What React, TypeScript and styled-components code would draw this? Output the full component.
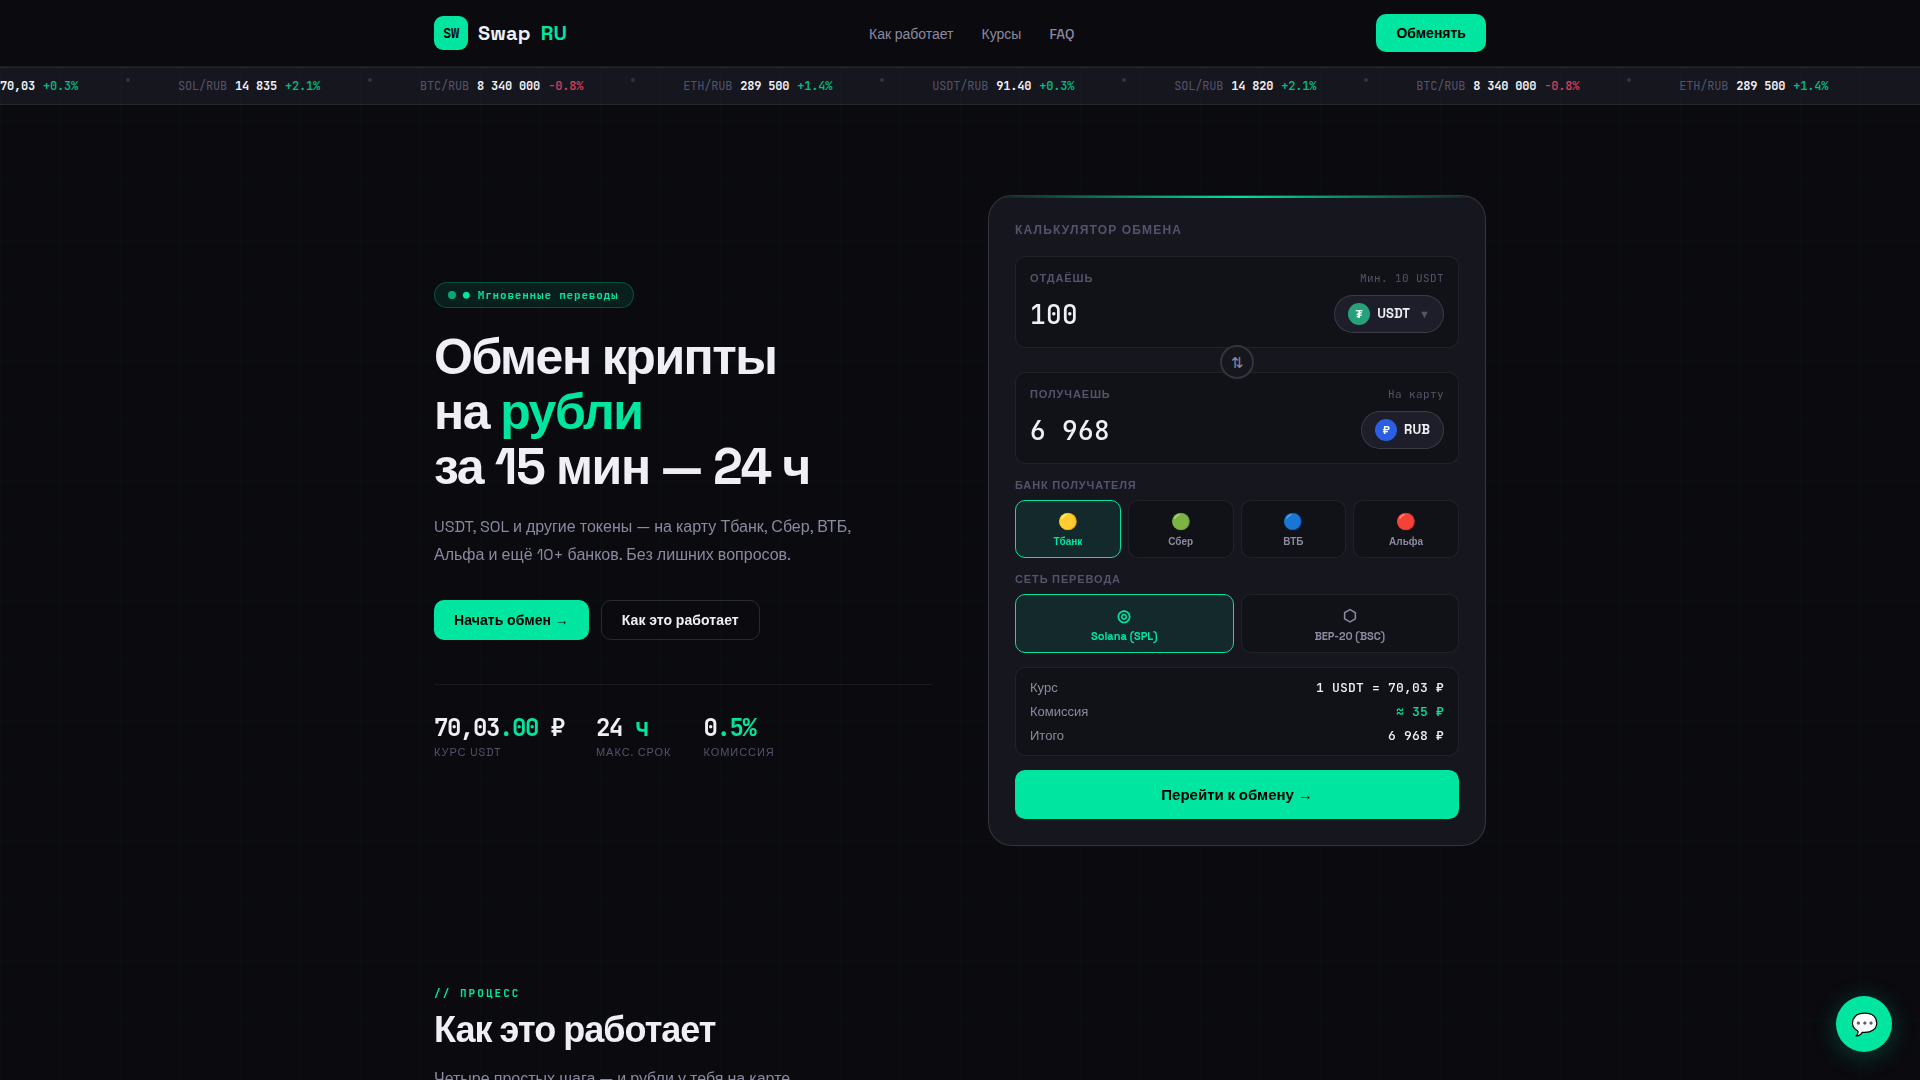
import React from 'react';
import styled, { createGlobalStyle, css, ThemeProvider } from 'styled-components';

const theme = {
  bg: '#0a0a0f',
  surface: '#111217',
  card: '#16161f',
  raised: '#1e1e2a',
  line: 'rgba(255, 255, 255, 0.07)',
  lineStrong: 'rgba(255, 255, 255, 0.13)',
  accent: '#00e5a0',
  text: '#f0eff5',
  muted: '#8b89a0',
  dim: '#55536b',
  red: '#ff4d6a',
  sans: "'Space Grotesk', 'Liberation Sans', sans-serif",
  mono: "'JetBrains Mono', 'DejaVu Sans Mono', monospace",
};

const GlobalStyle = createGlobalStyle`
  * {
    box-sizing: border-box;
    margin: 0;
    padding: 0;
  }

  body {
    background: ${theme.bg};
    color: ${theme.text};
    font-family: ${theme.sans};
    line-height: 1.6;
    height: 1080px;
    overflow: hidden;
  }

  button {
    font-family: inherit;
    border: 0;
    cursor: pointer;
  }
`;

const GridOverlay = styled.div`
  position: fixed;
  inset: 0;
  pointer-events: none;
  background-image: linear-gradient(rgba(0, 229, 160, 0.024) 1px, transparent 1px),
    linear-gradient(90deg, rgba(0, 229, 160, 0.024) 1px, transparent 1px);
  background-size: 60px 60px;
`;

const Container = styled.div`
  width: 1100px;
  margin: 0 auto;
  padding: 0 24px;
`;

const Header = styled.header`
  position: relative;
  z-index: 10;
  height: 67px;
  background: ${({ theme }) => theme.bg};
  border-bottom: 1px solid ${({ theme }) => theme.line};
`;

const HeaderRow = styled(Container)`
  display: flex;
  align-items: center;
  justify-content: space-between;
  height: 66px;
`;

const Logo = styled.div`
  display: flex;
  align-items: center;
  gap: 10px;
  font-size: 20px;
  font-weight: 700;
  letter-spacing: 0.15px;
`;

const LogoMark = styled.div`
  display: grid;
  place-items: center;
  width: 34px;
  height: 34px;
  border-radius: 9px;
  background: ${({ theme }) => theme.accent};
  color: #000;
  font: 700 14px/1 ${({ theme }) => theme.mono};
  letter-spacing: -0.4px;
`;

const Accent = styled.span`
  color: ${({ theme }) => theme.accent};
`;

const Nav = styled.nav`
  display: flex;
  gap: 28px;
  padding-top: 2px;
`;

const NavLink = styled.a`
  color: ${({ theme }) => theme.muted};
  font-size: 14px;
  font-weight: 500;
`;

const Button = styled.button<{ $ghost?: boolean }>`
  height: 40px;
  padding: 0 20px;
  border-radius: 10px;
  background: ${({ theme }) => theme.accent};
  color: #000;
  font-size: 14px;
  font-weight: 700;

  ${({ $ghost, theme }) =>
    $ghost &&
    css`
      background: transparent;
      border: 1px solid ${theme.lineStrong};
      color: ${theme.text};
    `}
`;

const Arrow = styled.span`
  font-family: 'Liberation Sans', sans-serif;
`;

const HeaderButton = styled(Button)`
  height: 38px;
`;

const Ticker = styled.div`
  height: 38px;
  padding: 10px 0;
  overflow: hidden;
  background: ${({ theme }) => theme.card};
  border-top: 1px solid ${({ theme }) => theme.line};
  border-bottom: 1px solid ${({ theme }) => theme.line};
`;

const TickerTrack = styled.div`
  display: flex;
  gap: 48px;
  width: max-content;
  transform: translateX(-64px);
`;

const TickerItem = styled.div`
  display: flex;
  gap: 8px;
  font: 400 12px/16px ${({ theme }) => theme.mono};
  letter-spacing: -0.2px;
  color: ${({ theme }) => theme.dim};
  white-space: nowrap;
`;

const TickerPrice = styled.span`
  color: ${({ theme }) => theme.text};
  font-weight: 600;
`;

const TickerChange = styled.span<{ $down: boolean }>`
  color: ${({ $down, theme }) => ($down ? theme.red : theme.accent)};
  font-weight: 500;
  opacity: 0.8;
`;

const TickerDot = styled.span`
  width: 4px;
  height: 4px;
  border-radius: 50%;
  background: #33323f;
`;

const Hero = styled(Container)`
  display: grid;
  grid-template-columns: 498px 498px;
  gap: 56px;
  align-items: center;
  margin-top: 90px;
  position: relative;
`;

const Badge = styled.div`
  display: flex;
  align-items: center;
  gap: 7px;
  width: fit-content;
  height: 26px;
  padding: 0 15px 0 13px;
  border: 1px solid rgba(0, 229, 160, 0.25);
  border-radius: 13px;
  background: rgba(0, 229, 160, 0.1);
  color: ${({ theme }) => theme.accent};
  font: 700 11px/1 ${({ theme }) => theme.mono};
  letter-spacing: 0.8px;
  white-space: nowrap;
`;

const BadgeDot = styled.span`
  width: 8px;
  height: 8px;
  border-radius: 50%;
  background: ${({ theme }) => theme.accent};
  opacity: 0.7;
`;

const Title = styled.h1`
  margin-top: 22px;
  font-size: 50px;
  line-height: 55px;
  letter-spacing: -1.5px;
`;

const TitleTerm = styled.span`
  letter-spacing: -1.35px;
`;

const Lead = styled.p`
  margin-top: 18px;
  color: ${({ theme }) => theme.muted};
  font-size: 16px;
  line-height: 28px;
`;

const Actions = styled.div`
  display: flex;
  gap: 12px;
  margin-top: 31px;

  ${Button} {
    letter-spacing: 0.08px;
  }
`;

const Stats = styled.div`
  display: flex;
  gap: 32px;
  margin-top: 44px;
  padding-top: 28px;
  border-top: 1px solid ${({ theme }) => theme.line};
`;

const StatValue = styled.div`
  font: 700 24px/29px ${({ theme }) => theme.mono};
  letter-spacing: -1.4px;
  white-space: nowrap;
`;

const StatLabel = styled.div`
  margin-top: 3px;
  color: ${({ theme }) => theme.dim};
  font-size: 11px;
  line-height: 14px;
  letter-spacing: 0.95px;
  text-transform: uppercase;
`;

const Card = styled.section`
  position: relative;
  height: 651px;
  padding: 26px;
  overflow: hidden;
  border: 1px solid ${({ theme }) => theme.lineStrong};
  border-radius: 24px;
  background: ${({ theme }) => theme.card};

  &::before {
    content: '';
    position: absolute;
    top: 0;
    left: 0;
    right: 0;
    height: 2px;
    background: linear-gradient(90deg, transparent, ${({ theme }) => theme.accent}, transparent);
  }
`;

const CardTitle = styled.h2`
  height: 34px;
  color: ${({ theme }) => theme.dim};
  font-size: 12px;
  line-height: 16px;
  letter-spacing: 1.2px;
  text-transform: uppercase;
`;

const Field = styled.div`
  height: 92px;
  padding: 14px;
  border: 1px solid ${({ theme }) => theme.line};
  border-radius: 10px;
  background: ${({ theme }) => theme.surface};
`;

const FieldHead = styled.div`
  display: flex;
  justify-content: space-between;
  align-items: center;
  height: 16px;
  margin-bottom: 8px;
`;

const FieldLabel = styled.span`
  color: ${({ theme }) => theme.dim};
  font-size: 11px;
  font-weight: 700;
  letter-spacing: 0.88px;
  text-transform: uppercase;
`;

const FieldHint = styled.span`
  height: 16px;
  color: ${({ theme }) => theme.dim};
  font: 400 11px/15px ${({ theme }) => theme.mono};
  letter-spacing: 0.4px;
`;

const FieldBody = styled.div`
  display: flex;
  justify-content: space-between;
  height: 38px;
`;

const Amount = styled.span`
  font: 500 26px/40px ${({ theme }) => theme.mono};
  letter-spacing: 0.4px;
`;

const TokenPill = styled.div`
  display: flex;
  align-items: center;
  gap: 7px;
  height: 38px;
  padding: 0 13px;
  border: 1px solid ${({ theme }) => theme.lineStrong};
  border-radius: 19px;
  background: ${({ theme }) => theme.raised};
  font-size: 13px;
  font-weight: 700;
`;

const TokenIcon = styled.span<{ $color: string }>`
  display: grid;
  place-items: center;
  width: 22px;
  height: 22px;
  border-radius: 50%;
  background: ${({ $color }) => $color};
  color: #fff;
  font-size: 11px;
  line-height: 1;
`;

const TokenName = styled.span`
  padding-top: 1px;
  letter-spacing: 0.1px;
`;

const Caret = styled.span`
  padding-top: 1px;
  margin: 0 0 0 2px;
  color: ${({ theme }) => theme.dim};
  font-size: 11px;
`;

const SwapButton = styled.button`
  position: relative;
  z-index: 1;
  display: block;
  width: 34px;
  height: 34px;
  margin: -3px auto -7px;
  border: 2px solid #34343e;
  border-radius: 50%;
  background: ${({ theme }) => theme.card};
  color: ${({ theme }) => theme.muted};
  font-size: 15px;
  line-height: 1;
`;

const GroupLabel = styled(FieldLabel)`
  display: block;
  height: 16px;
  line-height: 16px;
  margin-top: 13px;
  margin-bottom: 7px;
`;

const Options = styled.div<{ $columns: number }>`
  display: grid;
  grid-template-columns: repeat(${({ $columns }) => $columns}, 1fr);
  gap: 7px;
`;

const Option = styled.button<{ $active: boolean; $wide?: boolean }>`
  display: flex;
  flex-direction: column;
  align-items: center;
  height: ${({ $wide }) => ($wide ? 59 : 58)}px;
  padding-top: 9px;
  border: 1px solid ${({ $active, theme }) => ($active ? theme.accent : theme.line)};
  border-radius: 10px;
  background: ${({ $active, theme }) => ($active ? '#14292b' : theme.surface)};
  color: ${({ $active, theme }) => ($active ? theme.accent : theme.muted)};
  font-size: ${({ $wide }) => ($wide ? 11 : 10)}px;
  font-weight: 700;
  line-height: 16px;
`;

const OptionIcon = styled.span`
  height: 24px;
  font-size: 16px;
  line-height: 24px;
`;

const Summary = styled.div`
  height: 89px;
  margin-top: 14px;
  padding: 8px 14px;
  border: 1px solid ${({ theme }) => theme.line};
  border-radius: 10px;
  background: ${({ theme }) => theme.surface};
`;

const SummaryRow = styled.div`
  display: flex;
  justify-content: space-between;
  color: ${({ theme }) => theme.muted};
  font-size: 13px;
  line-height: 24px;
`;

const SummaryValue = styled.span<{ $green?: boolean }>`
  color: ${({ $green, theme }) => ($green ? theme.accent : theme.text)};
  font-family: ${({ theme }) => theme.mono};
  font-weight: 500;
  letter-spacing: 0.2px;
`;

const SubmitButton = styled(Button)`
  width: 100%;
  height: 49px;
  margin-top: 14px;
  font-size: 15px;
`;

const Process = styled(Container)`
  margin-top: 138px;
  position: relative;
`;

const Kicker = styled.div`
  color: ${({ theme }) => theme.accent};
  font: 700 11px/18px ${({ theme }) => theme.mono};
  letter-spacing: 2.05px;
`;

const SectionTitle = styled.h2`
  margin-top: 8px;
  font-size: 36px;
  line-height: 40px;
  letter-spacing: -1px;
`;

const SectionText = styled.p`
  margin-top: 16px;
  color: ${({ theme }) => theme.muted};
  font-size: 16px;
  line-height: 26px;
`;

const ChatButton = styled.button`
  position: fixed;
  right: 28px;
  bottom: 28px;
  display: grid;
  place-items: center;
  width: 56px;
  height: 56px;
  border-radius: 50%;
  background: ${({ theme }) => theme.accent};
  box-shadow: 0 4px 24px rgba(0, 229, 160, 0.25);
  font-size: 22px;
  line-height: 1;
`;

const rates = [
  { pair: 'USDT/RUB', price: '70,03', change: '+0.3%' },
  { pair: 'SOL/RUB', price: '14 835', change: '+2.1%' },
  { pair: 'BTC/RUB', price: '8 340 000', change: '-0.8%' },
  { pair: 'ETH/RUB', price: '289 500', change: '+1.4%' },
  { pair: 'USDT/RUB', price: '91.40', change: '+0.3%' },
  { pair: 'SOL/RUB', price: '14 820', change: '+2.1%' },
  { pair: 'BTC/RUB', price: '8 340 000', change: '-0.8%' },
  { pair: 'ETH/RUB', price: '289 500', change: '+1.4%' },
];

const banks = [
  { icon: '🟡', name: 'Тбанк' },
  { icon: '🟢', name: 'Сбер' },
  { icon: '🔵', name: 'ВТБ' },
  { icon: '🔴', name: 'Альфа' },
];

const networks = [
  { icon: '◎', name: 'Solana (SPL)' },
  { icon: '⬡', name: 'BEP-20 (BSC)' },
];

const Calculator: React.FC = () => (
  <Card>
    <CardTitle>Калькулятор обмена</CardTitle>
    <Field>
      <FieldHead>
        <FieldLabel>Отдаёшь</FieldLabel>
        <FieldHint>Мин. 10 USDT</FieldHint>
      </FieldHead>
      <FieldBody>
        <Amount>100</Amount>
        <TokenPill>
          <TokenIcon $color="#26a17b">₮</TokenIcon>
          <TokenName>USDT</TokenName>
          <Caret>▼</Caret>
        </TokenPill>
      </FieldBody>
    </Field>
    <SwapButton>⇅</SwapButton>
    <Field>
      <FieldHead>
        <FieldLabel>Получаешь</FieldLabel>
        <FieldHint>На карту</FieldHint>
      </FieldHead>
      <FieldBody>
        <Amount>6 968</Amount>
        <TokenPill>
          <TokenIcon $color="#2b5fe3">₽</TokenIcon>
          <TokenName>RUB</TokenName>
        </TokenPill>
      </FieldBody>
    </Field>
    <GroupLabel>Банк получателя</GroupLabel>
    <Options $columns={4}>
      {banks.map((bank, i) => (
        <Option key={bank.name} $active={i === 0}>
          <OptionIcon>{bank.icon}</OptionIcon>
          {bank.name}
        </Option>
      ))}
    </Options>
    <GroupLabel>Сеть перевода</GroupLabel>
    <Options $columns={2}>
      {networks.map((network, i) => (
        <Option key={network.name} $active={i === 0} $wide>
          <OptionIcon>{network.icon}</OptionIcon>
          {network.name}
        </Option>
      ))}
    </Options>
    <Summary>
      <SummaryRow>
        Курс <SummaryValue>1 USDT = 70,03 ₽</SummaryValue>
      </SummaryRow>
      <SummaryRow>
        Комиссия <SummaryValue $green>≈ 35 ₽</SummaryValue>
      </SummaryRow>
      <SummaryRow>
        Итого <SummaryValue>6 968 ₽</SummaryValue>
      </SummaryRow>
    </Summary>
    <SubmitButton>
      Перейти к обмену <Arrow>→</Arrow>
    </SubmitButton>
  </Card>
);

const App: React.FC = () => (
  <ThemeProvider theme={theme}>
    <GlobalStyle />
    <Header>
      <HeaderRow>
        <Logo>
          <LogoMark>SW</LogoMark>
          <span>Swap</span>
          <Accent>RU</Accent>
        </Logo>
        <Nav>
          <NavLink>Как работает</NavLink>
          <NavLink>Курсы</NavLink>
          <NavLink>FAQ</NavLink>
        </Nav>
        <HeaderButton>Обменять</HeaderButton>
      </HeaderRow>
    </Header>
    <Ticker>
      <TickerTrack>
        {rates.map(({ pair, price, change }, i) => (
          <React.Fragment key={i}>
            {i > 0 && <TickerDot />}
            <TickerItem>
              {pair}
              <TickerPrice>{price}</TickerPrice>
              <TickerChange $down={change.startsWith('-')}>{change}</TickerChange>
            </TickerItem>
          </React.Fragment>
        ))}
      </TickerTrack>
    </Ticker>
    <GridOverlay />
    <Hero>
      <div>
        <Badge>
          <BadgeDot />● Мгновенные переводы
        </Badge>
        <Title>
          Обмен крипты
          <br />
          на <Accent>рубли</Accent>
          <br />
          <TitleTerm>за 15 мин — 24 ч</TitleTerm>
        </Title>
        <Lead>
          USDT, SOL и другие токены — на карту Тбанк, Сбер, ВТБ,
          <br />
          Альфа и ещё 10+ банков. Без лишних вопросов.
        </Lead>
        <Actions>
          <Button>
            Начать обмен <Arrow>→</Arrow>
          </Button>
          <Button $ghost>Как это работает</Button>
        </Actions>
        <Stats>
          <div>
            <StatValue>
              70,03<Accent>.00</Accent> ₽
            </StatValue>
            <StatLabel>Курс USDT</StatLabel>
          </div>
          <div>
            <StatValue>
              24 <Accent>ч</Accent>
            </StatValue>
            <StatLabel>Макс. срок</StatLabel>
          </div>
          <div>
            <StatValue>
              0<Accent>.5%</Accent>
            </StatValue>
            <StatLabel>Комиссия</StatLabel>
          </div>
        </Stats>
      </div>
      <Calculator />
    </Hero>
    <Process>
      <Kicker>// ПРОЦЕСС</Kicker>
      <SectionTitle>Как это работает</SectionTitle>
      <SectionText>Четыре простых шага — и рубли у тебя на карте.</SectionText>
    </Process>
    <ChatButton>💬</ChatButton>
  </ThemeProvider>
);

export default App;
